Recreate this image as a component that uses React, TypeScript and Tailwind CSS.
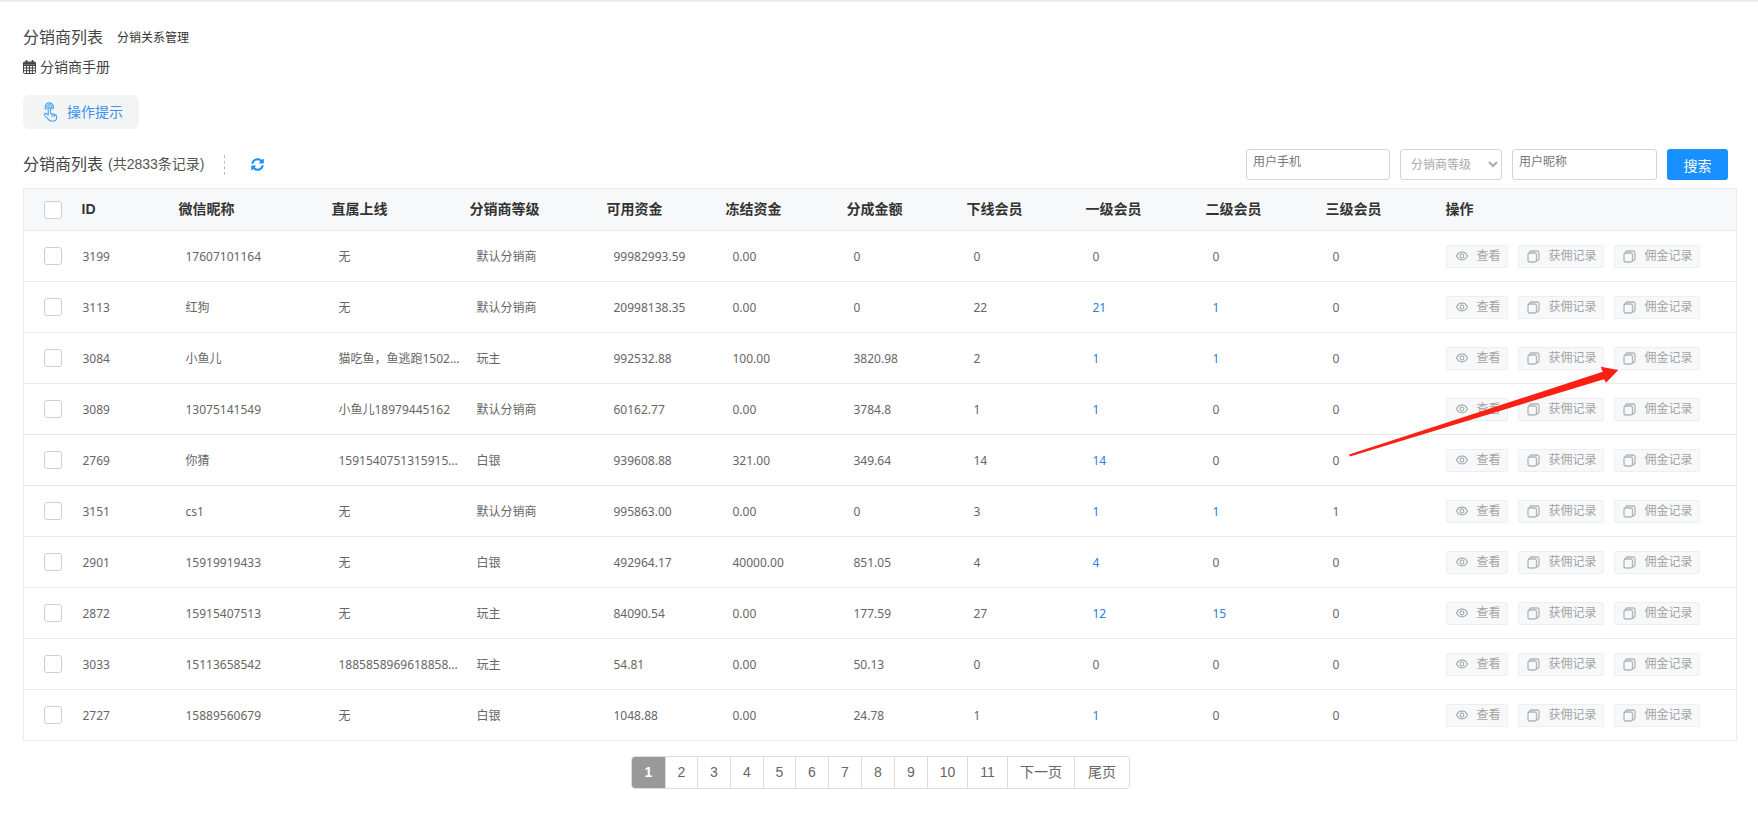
import React from "react";
import { FaSyncAlt } from "react-icons/fa";
import { AiOutlineEye } from "react-icons/ai";

const rows = [
  ["3199", "17607101164", "无", "默认分销商", "99982993.59", "0.00", "0", "0", "0", "0", "0"],
  ["3113", "红狗", "无", "默认分销商", "20998138.35", "0.00", "0", "22", "21", "1", "0"],
  ["3084", "小鱼儿", "猫吃鱼，鱼逃跑15021234567", "玩主", "992532.88", "100.00", "3820.98", "2", "1", "1", "0"],
  ["3089", "13075141549", "小鱼儿18979445162", "默认分销商", "60162.77", "0.00", "3784.8", "1", "1", "0", "0"],
  ["2769", "你猜", "15915407513159154075", "白银", "939608.88", "321.00", "349.64", "14", "14", "0", "0"],
  ["3151", "cs1", "无", "默认分销商", "995863.00", "0.00", "0", "3", "1", "1", "1"],
  ["2901", "15919919433", "无", "白银", "492964.17", "40000.00", "851.05", "4", "4", "0", "0"],
  ["2872", "15915407513", "无", "玩主", "84090.54", "0.00", "177.59", "27", "12", "15", "0"],
  ["3033", "15113658542", "18858589696188585896", "玩主", "54.81", "0.00", "50.13", "0", "0", "0", "0"],
  ["2727", "15889560679", "无", "白银", "1048.88", "0.00", "24.78", "1", "1", "0", "0"],
];

const heads = [
  { label: "ID", w: "w-[97px]" },
  { label: "微信昵称", w: "w-[153px]" },
  { label: "直属上线", w: "w-[138px]" },
  { label: "分销商等级", w: "w-[137px]" },
  { label: "可用资金", w: "w-[119px]" },
  { label: "冻结资金", w: "w-[121px]" },
  { label: "分成金额", w: "w-[120px]" },
  { label: "下线会员", w: "w-[119px]" },
  { label: "一级会员", w: "w-[120px]" },
  { label: "二级会员", w: "w-[120px]" },
  { label: "三级会员", w: "w-[120px]" },
  { label: "操作", w: "" },
];

const pages = [
  { label: "1", w: "w-[34px]" },
  { label: "2", w: "w-[32px]" },
  { label: "3", w: "w-[33px]" },
  { label: "4", w: "w-[33px]" },
  { label: "5", w: "w-[32px]" },
  { label: "6", w: "w-[33px]" },
  { label: "7", w: "w-[33px]" },
  { label: "8", w: "w-[33px]" },
  { label: "9", w: "w-[33px]" },
  { label: "10", w: "w-[40px]" },
  { label: "11", w: "w-[40px]" },
  { label: "下一页", w: "w-[67px]" },
  { label: "尾页", w: "w-[54px]" },
];

function CopyIcon() {
  return (
    <svg width="13" height="13" viewBox="0 0 13 13" fill="none" stroke="#b4b4b4" strokeWidth="1.3">
      <rect x="1" y="3" width="8.5" height="9" rx="1.8" />
      <path d="M1.8 3.2 3.8 1h6.4A1.8 1.8 0 0 1 12 2.8v6.4l-2.4 2.2" />
    </svg>
  );
}

function CalendarIcon() {
  return (
    <svg width="13" height="14" viewBox="0 0 13 14" fill="none" stroke="#444" strokeWidth="1">
      <rect x="0.5" y="2" width="12" height="11.5" rx="1" />
      <path d="M0.5 5.5h12M0.5 8h12M0.5 10.7h12M3.6 5.5v8M6.5 5.5v8M9.4 5.5v8" />
      <path d="M0.5 3.5h12" strokeWidth="2.5" />
      <path d="M3.5 0v3M9.5 0v3" strokeWidth="1.6" />
    </svg>
  );
}

function TapIcon() {
  return (
    <svg width="18" height="20" viewBox="0 0 18 20" fill="none" stroke="#45a0f5" strokeWidth="1.1" strokeLinecap="round" strokeLinejoin="round">
      <path d="M4.6 7.2A4.2 4.2 0 1 1 12 7" />
      <path d="M6 6.6a2.6 2.6 0 1 1 4.6.2" />
      <path d="M7.2 6.2a1.1 1.1 0 0 1 2.2 0v5.3l4.6 1.1c1 .3 1.6 1 1.6 2v1.2c0 1.8-1.2 3.2-3 3.2H10c-1 0-1.8-.5-2.4-1.3L3.4 13a1.2 1.2 0 0 1 1.8-1.5l2 1.7z" />
      <path d="M11 12v2.5M13.2 12.6v2" />
    </svg>
  );
}

function ActionButton({ label, eye, w }: { label: string; eye?: boolean; w: string }) {
  return (
    <button className={`flex h-[23px] items-center gap-[8px] rounded-[2px] border border-[#eceef1] bg-[#f7f8fa] pl-[8px] text-[12px] text-[#a3a3a3] ${w}`}>
      <span className="flex w-[14px] justify-center">
        {eye ? <AiOutlineEye className="text-[16px] text-[#999]" /> : <CopyIcon />}
      </span>
      {label}
    </button>
  );
}

function Checkbox() {
  return <div className="h-[18px] w-[18px] rounded-[3px] border border-[#cfcfcf] bg-white" />;
}

function Cell({ value, link }: { value: string; link?: boolean }) {
  const isLink = link && value !== "0";
  return (
    <td className={`truncate pl-[7px] pr-[8px] pt-[1px] ${isLink ? "text-[#2a7de1]" : ""}`}>{value}</td>
  );
}

export default function App() {
  return (
    <div className="relative h-[813px] w-[1758px] overflow-hidden border-t-2 border-[#e8ebef] bg-white pl-[23px] pr-[21px] font-['Liberation_Sans','Noto_Sans_CJK_SC',sans-serif] text-[#666]">
      <div className="flex items-center pt-[26px] leading-[20px]">
        <span className="text-[16px] text-[#444]">分销商列表</span>
        <span className="ml-[14px] text-[12px] text-[#333]">分销关系管理</span>
      </div>
      <div className="mt-[9px] flex items-center gap-[4px] text-[14px] leading-[20px] text-[#444]">
        <CalendarIcon />
        分销商手册
      </div>
      <div className="mt-[18px] flex h-[34px] w-[116px] items-center gap-[8px] rounded-[6px] bg-[#f3f5f5] pl-[18px] text-[14px] text-[#3d8ff0]">
        <TapIcon />
        操作提示
      </div>

      <div className="mt-[20px] flex h-[31px] items-center">
        <span className="text-[16px] text-[#444]">分销商列表</span>
        <span className="ml-[5px] text-[14px] text-[#555]">(共2833条记录)</span>
        <div className="ml-[20px] h-[20px] border-l border-dashed border-[#bbb]" />
        <FaSyncAlt className="ml-[26px] text-[13px] text-[#1890ff]" />
        <div className="ml-auto flex h-[31px] items-stretch pr-[9px] text-[12px]">
          <input
            placeholder="用户手机"
            className="w-[144px] rounded-[3px] border border-[#d5d5d5] px-[6px] pb-[6px] placeholder:text-[#777]"
          />
          <select className="ml-[10px] w-[102px] rounded-[3px] border border-[#d5d5d5] bg-white px-[6px] text-[#aaa]">
            <option>分销商等级</option>
          </select>
          <input
            placeholder="用户昵称"
            className="ml-[10px] w-[145px] rounded-[3px] border border-[#d5d5d5] px-[6px] pb-[6px] placeholder:text-[#777]"
          />
          <button className="ml-[10px] w-[61px] rounded-[3px] bg-[#1890ff] pt-[3px] text-[14px] text-white">搜索</button>
        </div>
      </div>

      <table className="mt-[8px] w-full table-fixed border border-[#e8eaee] font-['Noto_Sans','Noto_Sans_CJK_SC',sans-serif] text-[12px]">
        <thead>
          <tr className="h-[42px] border-b border-[#e8eaee] bg-[#f7f8fa] text-left font-['Liberation_Sans','Noto_Sans_CJK_SC',sans-serif] text-[14px] font-bold text-[#333]">
            <th className="w-[58px] pl-[20px] font-normal">
              <Checkbox />
            </th>
            {heads.map((h) => (
              <th key={h.label} className={h.w}>
                {h.label}
              </th>
            ))}
          </tr>
        </thead>
        <tbody>
          {rows.map((row) => (
            <tr key={row[0]} className="h-[51px] border-b border-[#e8eaee] last:border-b-0">
              <td className="pl-[20px]">
                <Checkbox />
              </td>
              <td className="pl-px pt-[1px]">{row[0]}</td>
              {row.slice(1).map((value, i) => (
                <Cell key={i} value={value} link={i >= 7 && i <= 8} />
              ))}
              <td>
                <div className="flex gap-[10px]">
                  <ActionButton label="查看" eye w="w-[62px]" />
                  <ActionButton label="获佣记录" w="w-[86px]" />
                  <ActionButton label="佣金记录" w="w-[86px]" />
                </div>
              </td>
            </tr>
          ))}
        </tbody>
      </table>

      <div className="mt-[15px] flex justify-center pl-[1px]">
        <div className="flex h-[33px] overflow-hidden rounded-[4px] border border-[#ddd] text-[14px] text-[#666]">
          {pages.map((p, i) => (
            <div
              key={p.label}
              className={`flex items-center justify-center border-r border-[#ddd] last:border-r-0 ${p.w} ${i === 0 ? "bg-[#999] font-bold text-white" : ""}`}
            >
              {p.label}
            </div>
          ))}
        </div>
      </div>

      <svg className="absolute left-0 top-[-2px]" width="1758" height="813" pointerEvents="none">
        <polygon points="1349,454.5 1602.7,371.7 1600.7,366.7 1618.3,370 1606,382.7 1604,379.3 1350,456.5" fill="#fb2013" />
      </svg>
    </div>
  );
}
